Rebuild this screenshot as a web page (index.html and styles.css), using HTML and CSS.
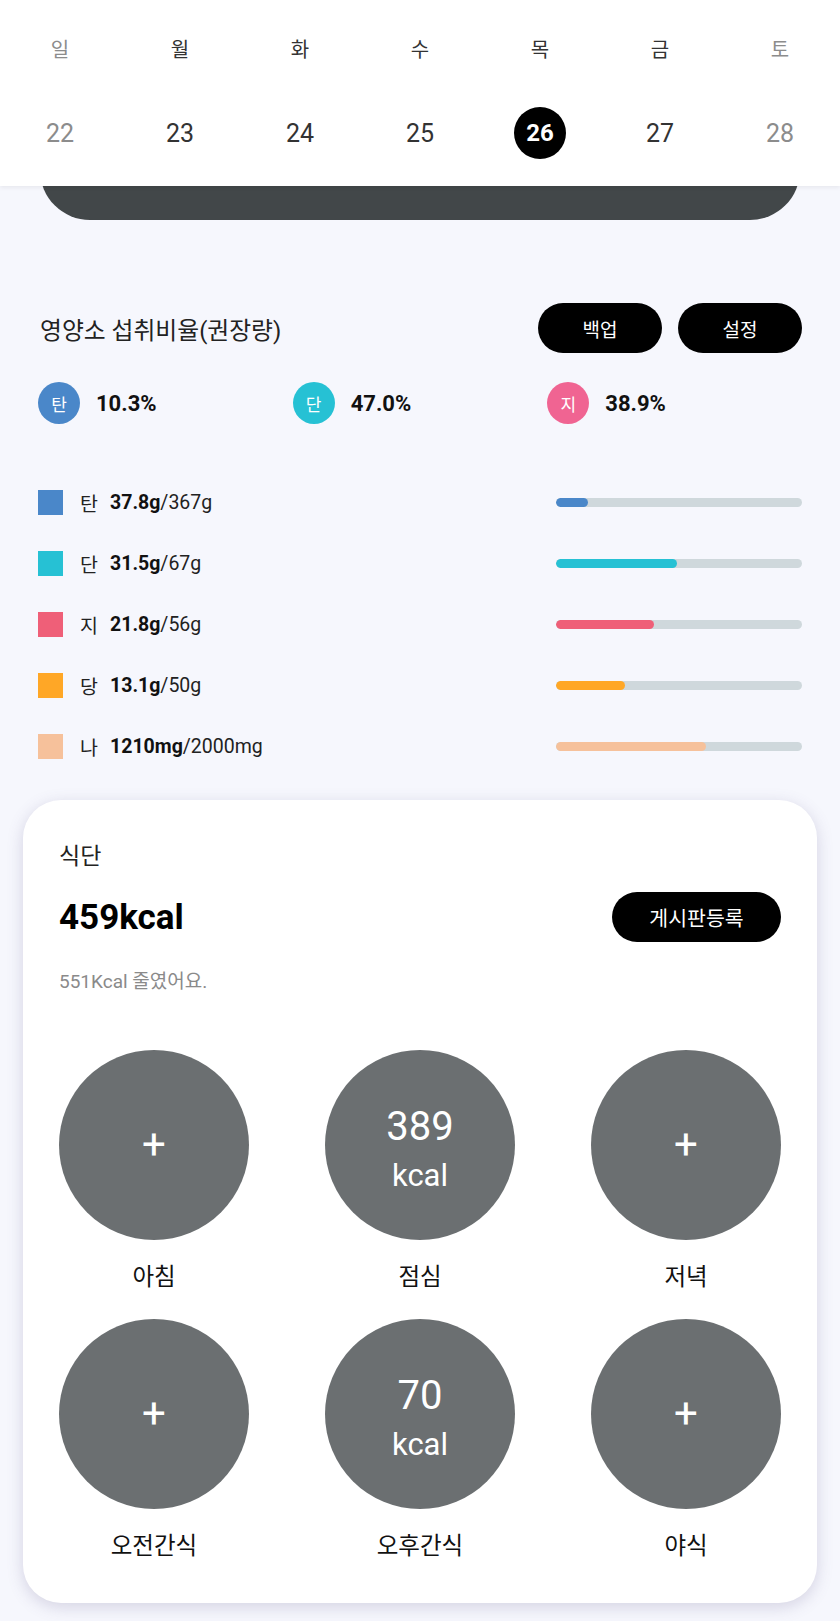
FILE: index.html
```html
<!DOCTYPE html>
<html lang="ko">
  <head>
    <meta charset="UTF-8" />
    <title>식단 기록</title>
    <link rel="stylesheet" href="styles.css">
  </head>
  <body>
    <!-- 주간 달력 -->
    <div class="week">
      <div class="week-row">
        <span class="day off">일</span>
        <span class="day">월</span>
        <span class="day">화</span>
        <span class="day">수</span>
        <span class="day">목</span>
        <span class="day">금</span>
        <span class="day off">토</span>
      </div>
      <div class="week-row dates">
        <span class="date off">22</span>
        <span class="date">23</span>
        <span class="date">24</span>
        <span class="date">25</span>
        <span class="date"><b class="today">26</b></span>
        <span class="date">27</span>
        <span class="date off">28</span>
      </div>
    </div>
    <div class="summary-tail"></div>

    <!-- 영양소 -->
    <div class="nutri">
      <div class="nutri-head">
        <div class="nutri-title">영양소 섭취비율(권장량)</div>
        <div class="btns">
          <button class="pill">백업</button>
          <button class="pill">설정</button>
        </div>
      </div>

      <div class="ratio">
        <div class="ratio-item"><span class="dot carb">탄</span><b>10.3%</b></div>
        <div class="ratio-item"><span class="dot prot">단</span><b>47.0%</b></div>
        <div class="ratio-item"><span class="dot fat">지</span><b>38.9%</b></div>
      </div>

      <div class="list">
        <div class="row">
          <span class="sq carb"></span>
          <span class="name">탄</span>
          <span class="val"><b>37.8g</b>/367g</span>
          <div class="bar"><div class="fill carb" style="width: 13%"></div></div>
        </div>
        <div class="row">
          <span class="sq prot"></span>
          <span class="name">단</span>
          <span class="val"><b>31.5g</b>/67g</span>
          <div class="bar"><div class="fill prot" style="width: 49%"></div></div>
        </div>
        <div class="row">
          <span class="sq fat2"></span>
          <span class="name">지</span>
          <span class="val"><b>21.8g</b>/56g</span>
          <div class="bar"><div class="fill fat2" style="width: 40%"></div></div>
        </div>
        <div class="row">
          <span class="sq sugar"></span>
          <span class="name">당</span>
          <span class="val"><b>13.1g</b>/50g</span>
          <div class="bar"><div class="fill sugar" style="width: 28%"></div></div>
        </div>
        <div class="row">
          <span class="sq salt"></span>
          <span class="name">나</span>
          <span class="val"><b>1210mg</b>/2000mg</span>
          <div class="bar"><div class="fill salt" style="width: 61%"></div></div>
        </div>
      </div>
    </div>

    <!-- 식단 카드 -->
    <div class="card">
      <div class="card-title">식단</div>
      <div class="card-top">
        <div class="kcal">459kcal</div>
        <button class="pill wide">게시판등록</button>
      </div>
      <div class="card-sub">551Kcal 줄였어요.</div>

      <div class="meals">
        <div class="meal">
          <div class="plate"><span class="plus">+</span></div>
          <div class="meal-name">아침</div>
        </div>
        <div class="meal">
          <div class="plate"><span class="num">389</span><span class="unit">kcal</span></div>
          <div class="meal-name">점심</div>
        </div>
        <div class="meal">
          <div class="plate"><span class="plus">+</span></div>
          <div class="meal-name">저녁</div>
        </div>
        <div class="meal">
          <div class="plate"><span class="plus">+</span></div>
          <div class="meal-name">오전간식</div>
        </div>
        <div class="meal">
          <div class="plate"><span class="num">70</span><span class="unit">kcal</span></div>
          <div class="meal-name">오후간식</div>
        </div>
        <div class="meal">
          <div class="plate"><span class="plus">+</span></div>
          <div class="meal-name">야식</div>
        </div>
      </div>
    </div>
  </body>
</html>
```

FILE: styles.css
```css
body {
  margin: 0;
  background: #f6f7fd;
  font-family: "Roboto", "Noto Sans CJK KR", sans-serif;
  color: #222;
}

button {
  font-family: inherit;
}

/* 주간 달력 */
.week {
  position: relative;
  z-index: 1;
  background: #fff;
  padding: 30px 0 27px;
  box-shadow: 0 2px 4px rgba(0, 0, 0, 0.06);
}

.week-row {
  display: grid;
  grid-template-columns: repeat(7, 1fr);
  text-align: center;
}

.day {
  font-size: 20px;
  line-height: 40px;
  color: #333;
}

.dates {
  margin-top: 37px;
}

.date {
  display: flex;
  justify-content: center;
  align-items: center;
  height: 52px;
  font-size: 25px;
  color: #333;
}

.off {
  color: #8c8c8c;
}

.today {
  display: flex;
  justify-content: center;
  align-items: center;
  width: 52px;
  height: 52px;
  border-radius: 50%;
  background: #000;
  color: #fff;
  font-size: 24px;
  font-weight: 700;
}

.summary-tail {
  height: 50px;
  margin: -16px 40px 0;
  background: #424749;
  border-radius: 0 0 50px 50px;
}

/* 영양소 */
.nutri {
  padding: 0 38px;
}

.nutri-head {
  display: flex;
  justify-content: space-between;
  align-items: center;
  margin-top: 83px;
}

.nutri-title {
  font-size: 23.8px;
  padding-left: 2px;
}

.btns {
  display: flex;
  gap: 16px;
}

.pill {
  width: 124px;
  height: 50px;
  border: none;
  border-radius: 25px;
  background: #000;
  color: #fff;
  font-size: 19px;
}

.pill.wide {
  width: 169px;
  font-size: 20.5px;
}

.ratio {
  display: grid;
  grid-template-columns: repeat(3, 1fr);
  margin-top: 29px;
}

.ratio-item {
  display: flex;
  align-items: center;
  gap: 16px;
}

.ratio-item b {
  font-size: 22px;
  color: #111;
}

.dot {
  display: flex;
  justify-content: center;
  align-items: center;
  width: 42px;
  height: 42px;
  border-radius: 50%;
  color: #fff;
  font-size: 17px;
}

.carb { background: #4a87c9; }
.prot { background: #26c1d4; }
.fat { background: #f06492; }
.fat2 { background: #ef5f78; }
.sugar { background: #ffa726; }
.salt { background: #f6c19b; }

.list {
  display: flex;
  flex-direction: column;
  gap: 36px;
  margin-top: 66px;
}

.row {
  display: flex;
  align-items: center;
  height: 25px;
  font-size: 19.5px;
  color: #222;
}

.sq {
  width: 25px;
  height: 25px;
}

.name {
  margin-left: 17px;
  width: 30px;
}

.val {
  flex: 1;
}

.val b {
  color: #111;
}

.bar {
  width: 246px;
  height: 9px;
  border-radius: 5px;
  background: #cfd8dc;
  overflow: hidden;
}

.fill {
  height: 100%;
  border-radius: 5px;
}

/* 식단 카드 */
.card {
  margin: 41px 23px 18px;
  padding: 44px 36px 42px;
  background: #fff;
  border-radius: 38px;
  box-shadow: 0 4px 16px rgba(90, 80, 130, 0.22);
}

.card-title {
  font-size: 23px;
  line-height: 26px;
  color: #222;
}

.card-top {
  display: flex;
  justify-content: space-between;
  align-items: center;
  margin-top: 22px;
}

.kcal {
  font-size: 35px;
  font-weight: 700;
  color: #000;
}

.card-sub {
  margin-top: 29px;
  font-size: 19px;
  line-height: 22px;
  color: #8a8a8a;
}

.meals {
  display: flex;
  flex-wrap: wrap;
  justify-content: space-between;
  row-gap: 27px;
  margin-top: 57px;
}

.meal {
  display: flex;
  flex-direction: column;
  align-items: center;
  width: 190px;
}

.plate {
  display: flex;
  flex-direction: column;
  justify-content: center;
  align-items: center;
  width: 190px;
  height: 190px;
  border-radius: 50%;
  background: #6b6f71;
  color: #fff;
}

.plus {
  font-size: 42px;
  line-height: 1;
}

.num {
  font-size: 40px;
  line-height: 49px;
  margin-top: 11px;
}

.unit {
  font-size: 31px;
  line-height: 49px;
}

.meal-name {
  margin-top: 22px;
  font-size: 23.5px;
  line-height: 30px;
  color: #111;
}
```
